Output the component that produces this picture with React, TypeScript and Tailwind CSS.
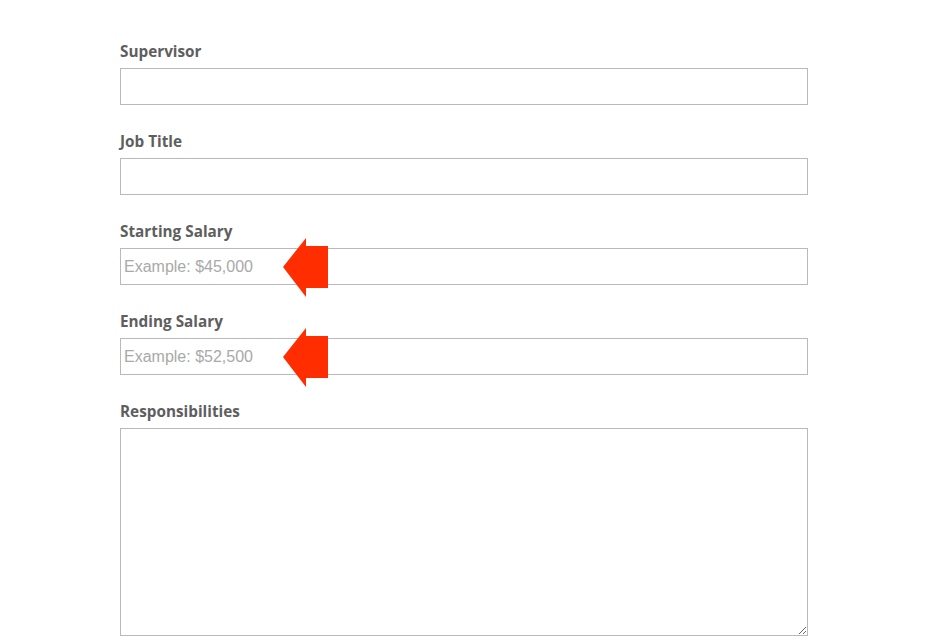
import React from "react";

function Arrow() {
  return (
    <svg
      className="absolute left-[163px] top-[-10px]"
      width="45"
      height="59"
      viewBox="0 0 45 59"
    >
      <polygon
        points="0,29 23,0 23,8 45,8 45,50 23,50 23,59"
        fill="#ff2d00"
      />
    </svg>
  );
}

const labelCls =
  "block h-[20px] leading-[22px] text-[15.3px] font-bold text-[#5e5e5e] mb-[8px]";

function Field({ label, placeholder, arrow }: { label: string; placeholder?: string; arrow?: boolean }) {
  return (
    <div className="flex flex-col">
      <label className={labelCls} style={{ fontFamily: '"Open Sans", sans-serif' }}>
        {label}
      </label>
      <div className="relative">
        <input
          className="w-full h-[37px] border border-[#b9b9b9] bg-white px-[3px] text-[16px] text-[#444] placeholder:text-[#a9a9a9] outline-none"
          style={{ fontFamily: '"Liberation Sans", Arial, sans-serif' }}
          placeholder={placeholder}
        />
        {arrow && <Arrow />}
      </div>
    </div>
  );
}

export default function App() {
  return (
    <div className="w-[928px] h-[640px] overflow-hidden bg-white">
      <div className="ml-[120px] w-[688px] pt-[40px] flex flex-col gap-[25px]">
        <Field label="Supervisor" />
        <Field label="Job Title" />
        <Field label="Starting Salary" placeholder="Example: $45,000" arrow />
        <Field label="Ending Salary" placeholder="Example: $52,500" arrow />
        <div className="flex flex-col">
          <label className={labelCls} style={{ fontFamily: '"Open Sans", sans-serif' }}>
            Responsibilities
          </label>
          <textarea className="w-full h-[208px] border border-[#b9b9b9] bg-white outline-none resize-y" />
        </div>
      </div>
    </div>
  );
}
